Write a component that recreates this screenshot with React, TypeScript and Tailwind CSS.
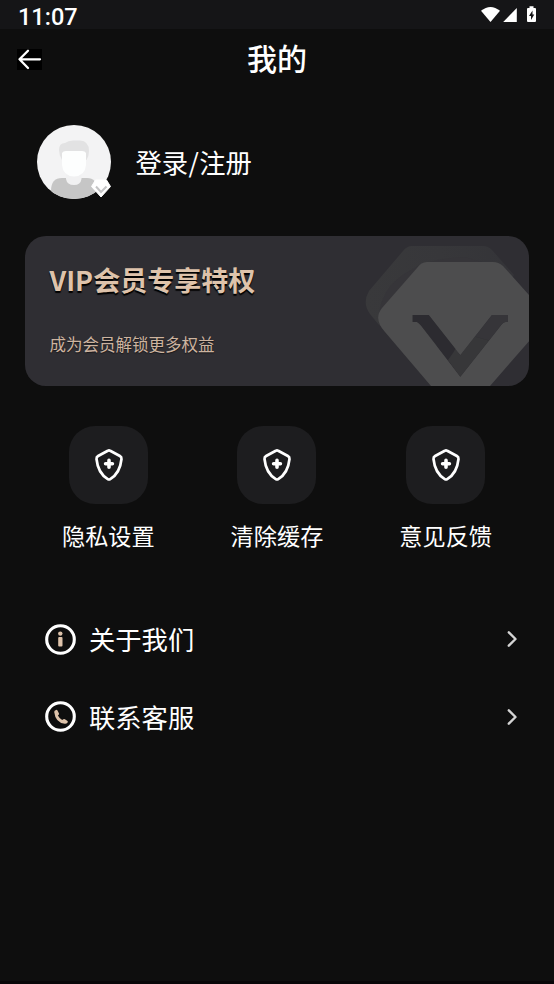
import React from 'react';

const StatusBar: React.FC = () => (
  <div className="h-[29px] shrink-0 bg-[#151517] flex items-start justify-between pl-[18px] pr-[17px]">
    <span className="pt-[5px] font-['Roboto',sans-serif] font-medium text-[23.5px] leading-[24px] text-white">11:07</span>
    <svg className="mt-[6px]" width="57" height="18" viewBox="0 0 57 18" fill="#fff">
      <path d="M1 4.8 Q10.5 -2.8 20 4.8 L10.5 16 Z" />
      <path d="M36.8 2 V16 H23.2 Z" />
      <path fillRule="evenodd" d="M49.5 0.3 H53.5 V2 H55 Q56 2 56 3 V15 Q56 16 55 16 H48 Q47 16 47 15 V3 Q47 2 48 2 H49.5 Z M52.5 4.5 L49 10 H51 V14 L54.3 8.5 H52.5 Z" />
    </svg>
  </div>
);

const Avatar: React.FC = () => (
  <svg className="shrink-0" width="75" height="74" viewBox="0 0 75 74">
    <defs>
      <clipPath id="avatar-clip">
        <circle cx="37" cy="37" r="37" />
      </clipPath>
    </defs>
    <g clipPath="url(#avatar-clip)">
      <rect width="74" height="74" fill="#f3f3f4" />
      <path d="M14 74 V66 Q14 53 25 53 H50 Q60 53 61 66 V74 Z" fill="#c6c6c6" />
      <path d="M29 50 H44.5 V54 Q43.5 60 37 60 Q30 60 29 54 Z" fill="#f1f1f2" />
      <path d="M25 35 Q22 30 22 25 Q22 18 28 18 Q31 15.5 36 15.5 H43 Q52 16 52 26 Q52 31 49.5 35 Z" fill="#e2e2e3" />
      <path d="M25 28 Q26 26 29 26 H45 Q48 26 49 28 V40 Q48 51 37 51.5 Q26 51 25 40 Z" fill="#fdfefe" />
    </g>
    <path d="M58.5 55 H69.5 L73.5 61.5 L64 72 L54.5 61.5 Z" fill="#fff" stroke="#fff" strokeWidth="1" strokeLinejoin="round" />
    <path d="M59 61.5 L64 67 L69.5 61.5" fill="none" stroke="#c4c4c5" strokeWidth="2" />
  </svg>
);

const DiamondArt: React.FC = () => (
  <svg className="absolute inset-0" width="504" height="150" viewBox="0 0 504 150">
    <defs>
      <linearGradient id="back-gem" x1="0" y1="0" x2="1" y2="0">
        <stop offset="0" stopColor="#39393b" />
        <stop offset="0.5" stopColor="#37373a" />
        <stop offset="1" stopColor="#343438" />
      </linearGradient>
    </defs>
    <path d="M387 10 H458 Q463 10 467 14 L489 39 L440 120 L354 89 L345 78 Q337 67 344 55 L378 15 Q382 10 387 10 Z" fill="url(#back-gem)" />
    <path d="M354 89 Q352 67 366 49 Q392 22 440 21 L486 35 L470 60 Z" fill="#363539" />
    <path
      fillRule="evenodd"
      d="M402 26 H468 Q473.5 26 478 30 L512 68 V96 L465 150 H406 L360 96 Q348 83 357 72 L392 32 Q396 26 402 26 Z M387.7 79 V86 H392 Q394 87 396 89.5 L435.3 140.7 L477 88 Q479 86 480.5 86 H483 V79 H467 L435.3 119.3 L403.7 79 Z"
      fill="#4d4d4e"
    />
    <path d="M387.7 79 V86 H392 Q394 87 396 89.5 L423 124 L430.5 113 L403.7 79 Z" fill="#2c2b30" />
    <path d="M423 124 L430.5 113.5 L435.3 119.3 L450 100.5 L464 104.5 L435.3 140.7 Z" fill="#373739" />
    <path d="M450 100.5 L467 79 H483 V86 H480.5 Q479 86 477 88 L464 104.5 Z" fill="#363539" />
  </svg>
);

const ShieldIcon: React.FC = () => (
  <svg width="30" height="34" viewBox="0 0 30 34" fill="none" stroke="#fff" strokeLinejoin="round" strokeLinecap="round">
    <path d="M13.8 2.8 Q15 2.1 16.2 2.8 L25.9 8 Q27.7 9 27.5 11 C26.6 20 23 27 16.2 31.1 Q15 31.9 13.8 31.1 C7 27 3.4 20 2.5 11 Q2.3 9 4.1 8 Z" strokeWidth="2.7" />
    <path d="M15 12.4 V19.2 M11.6 15.8 H18.4" strokeWidth="3.6" />
  </svg>
);

const InfoIcon: React.FC = () => (
  <svg width="31" height="31" viewBox="0 0 31 31">
    <circle cx="15.5" cy="15.5" r="13.8" fill="none" stroke="#fff" strokeWidth="3.1" />
    <circle cx="15.3" cy="9.6" r="2.2" fill="#dec3ab" />
    <rect x="13.2" y="13" width="4.3" height="9.5" rx="1" fill="#dec3ab" />
  </svg>
);

const PhoneIcon: React.FC = () => (
  <svg width="31" height="31" viewBox="0 0 31 31">
    <circle cx="15.5" cy="15.5" r="13.8" fill="none" stroke="#fff" strokeWidth="3.1" />
    <path d="M9.2 11 Q9.2 9.3 11 8.9 Q12 8.7 12.5 9.6 L13.9 12.2 Q14.3 13 13.7 13.7 L12.9 14.6 Q14.2 17.4 17.2 18.9 L18.4 18.2 Q19.1 17.8 19.9 18.3 L22.5 20 Q23.2 20.6 22.6 21.4 Q21.6 22.9 19.8 22.8 Q10.4 21.6 9.2 11 Z" fill="#dec3ab" />
  </svg>
);

const actions = ['隐私设置', '清除缓存', '意见反馈'];

const links = [
  { label: '关于我们', icon: <InfoIcon /> },
  { label: '联系客服', icon: <PhoneIcon /> },
];

const App: React.FC = () => {
  return (
    <div className="w-full h-[984px] bg-[#0e0e0e] text-white flex flex-col overflow-hidden font-['Noto_Sans_CJK_SC',sans-serif]">
      <StatusBar />

      <header className="h-[60px] shrink-0 grid grid-cols-3 items-center px-[17px]">
        <button className="w-[25px] h-[21px] bg-black">
          <svg width="25" height="21" viewBox="0 0 25 21" fill="none" stroke="#fff" strokeWidth="2.3" strokeLinecap="round" strokeLinejoin="round">
            <path d="M11 1.7 L2.5 10.3 L11 19 M2.5 10.3 H23" />
          </svg>
        </button>
        <h1 className="pb-[4px] text-center text-[30px] leading-[40px] font-medium">我的</h1>
      </header>

      <section className="mt-[36px] h-[74px] shrink-0 flex items-center pl-[37px] gap-[23.5px]">
        <Avatar />
        <span className="text-[26.3px] leading-[36px]">
          登录<span className="mx-[0.4px]">/</span>注册
        </span>
      </section>

      <section className="relative mt-[37px] mx-[25px] h-[150px] shrink-0 rounded-[21px] bg-[#2f2e33] overflow-hidden">
        <DiamondArt />
        <div className="relative pl-[24.5px] pt-[25px] text-[#dec3ab]">
          <h2 className="text-[27px] leading-[38px] font-bold [text-shadow:0px_2px_1px_#000]">VIP会员专享特权</h2>
          <p className="mt-[33px] text-[16.5px] leading-[24px] text-[#cdb4a0] [text-shadow:0px_1px_1px_#0008]">成为会员解锁更多权益</p>
        </div>
      </section>

      <section className="mt-[40px] mx-[24px] shrink-0 grid grid-cols-3">
        {actions.map((label) => (
          <div key={label} className="flex flex-col items-center">
            <div className="w-[79px] h-[78px] rounded-[26px] bg-[#1d1d1f] flex items-center justify-center pl-px">
              <ShieldIcon />
            </div>
            <span className="mt-[15px] text-[23.2px] leading-[32px]">{label}</span>
          </div>
        ))}
      </section>

      <nav className="mt-[49.5px] shrink-0 flex flex-col">
        {links.map(({ label, icon }) => (
          <div key={label} className="h-[77.5px] flex items-center pl-[45px] pr-[36px]">
            {icon}
            <span className="ml-[13px] flex-1 text-[26.3px] leading-[36px]">{label}</span>
            <svg width="12" height="18" viewBox="0 0 12 18" fill="none" stroke="#d4d4d4" strokeWidth="2.4" strokeLinecap="round" strokeLinejoin="round">
              <path d="M2.8 2.3 L9.5 9 L2.8 15.7" />
            </svg>
          </div>
        ))}
      </nav>

      <div className="mt-auto h-[3px] shrink-0 bg-[#080608]" />
    </div>
  );
};

export default App;
